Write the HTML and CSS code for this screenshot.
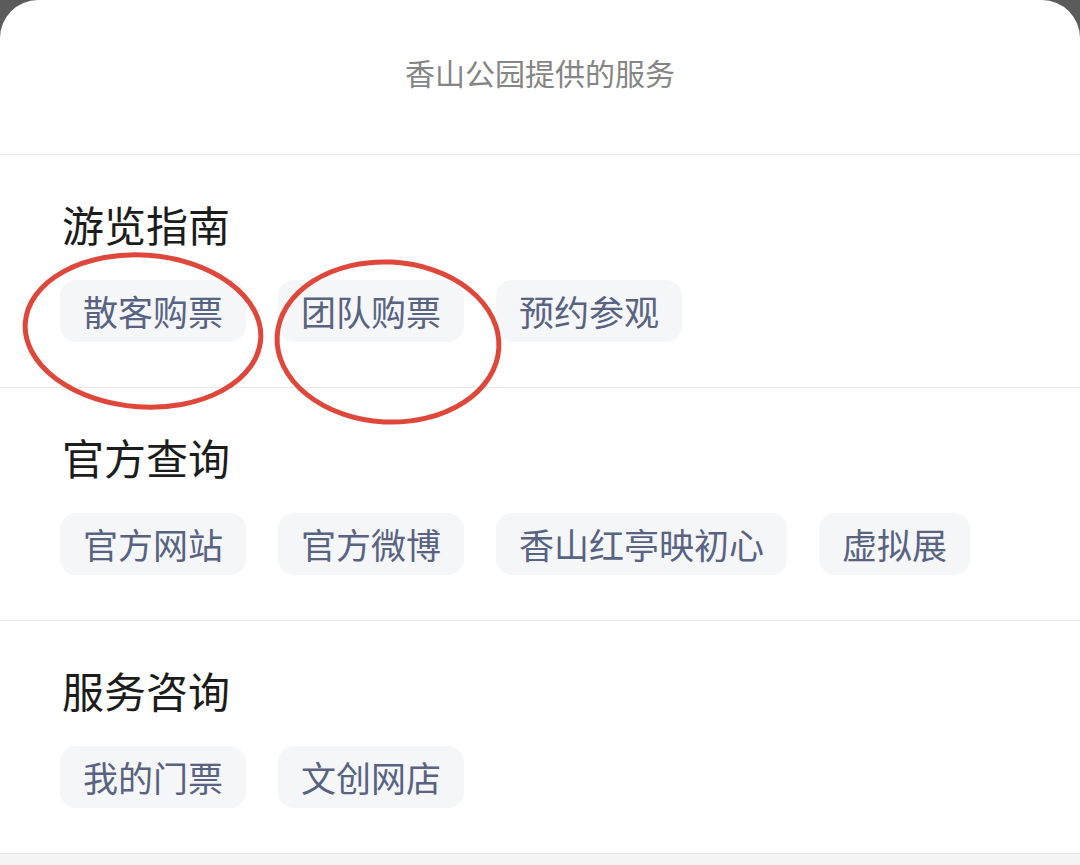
FILE: index.html
```html
<!DOCTYPE html>
<html lang="zh-CN">
<head>
    <meta charset="UTF-8">
    <title>香山公园提供的服务</title>
    <link rel="stylesheet" href="styles.css">
</head>
<body>
  <div class="sheet">
    <div class="sheet-title">香山公园提供的服务</div>

    <div class="group">
      <h2>游览指南</h2>
      <div class="chips">
        <span class="chip">散客购票</span>
        <span class="chip">团队购票</span>
        <span class="chip">预约参观</span>
      </div>
    </div>

    <div class="group">
      <h2>官方查询</h2>
      <div class="chips">
        <span class="chip">官方网站</span>
        <span class="chip">官方微博</span>
        <span class="chip">香山红亭映初心</span>
        <span class="chip">虚拟展</span>
      </div>
    </div>

    <div class="group">
      <h2>服务咨询</h2>
      <div class="chips">
        <span class="chip">我的门票</span>
        <span class="chip">文创网店</span>
      </div>
    </div>

    <div class="bottom-bar"></div>

    <!-- marcas rojas a mano sobre la captura -->
    <svg class="marks" width="1080" height="865" viewBox="0 0 1080 865">
      <ellipse cx="143" cy="331" rx="118" ry="76" transform="rotate(4 143 331)" fill="none" stroke="#e0473b" stroke-width="5"/>
      <ellipse cx="388" cy="342" rx="111" ry="80" transform="rotate(3 388 342)" fill="none" stroke="#e0473b" stroke-width="5"/>
    </svg>
  </div>
</body>
</html>
```

FILE: styles.css
```css
html, body {
    margin: 0;
    padding: 0;
}
body {
    background: #5b5b5b;
    font-family: "Noto Sans CJK SC", "Noto Sans", sans-serif;
    width: 1080px;
    height: 865px;
    overflow: hidden;
}
.sheet {
    position: relative;
    background: #fff;
    border-radius: 38px 38px 0 0;
    height: 865px;
    display: flex;
    flex-direction: column;
}
.sheet-title {
    height: 159px;
    box-sizing: border-box;
    display: flex;
    align-items: center;
    justify-content: center;
    padding-bottom: 10px;
    font-size: 30px;
    color: #858585;
    border-bottom: 1px solid #e8e8e8;
}
.group {
    padding: 44px 60px 45px 60px;
    border-bottom: 1px solid #e8e8e8;
}
.group:last-of-type {
    border-bottom: none;
}
.group h2 {
    margin: 0 0 0 2px;
    font-size: 42px;
    font-weight: 400;
    line-height: 50px;
    color: #1c1c1c;
}
.chips {
    display: flex;
    gap: 32px;
    margin-top: 31px;
}
.chip {
    display: inline-block;
    height: 62px;
    line-height: 62px;
    padding: 0 23px;
    font-size: 35px;
    color: #586382;
    background: #f5f6f8;
    border-radius: 16px;
}
.bottom-bar {
    margin-top: auto;
    height: 11px;
    background: #f4f4f4;
}
.marks {
    position: absolute;
    left: 0;
    top: 0;
    pointer-events: none;
}
```
